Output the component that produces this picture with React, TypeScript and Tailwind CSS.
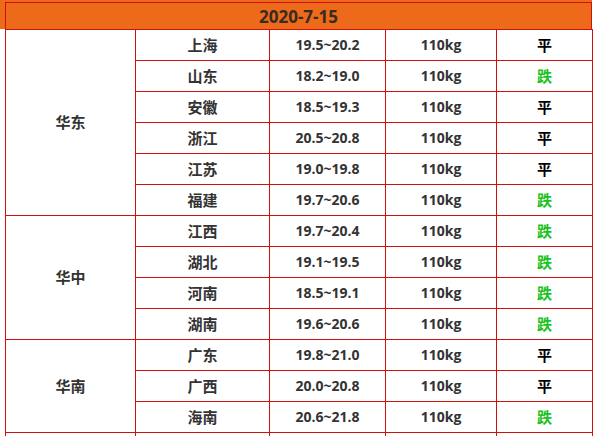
import React from 'react';

type Row = { city: string; range: string; trend: '平' | '跌' };
type Group = { region: string; rows: Row[] };

const groups: Group[] = [
  {
    region: '华东',
    rows: [
      { city: '上海', range: '19.5~20.2', trend: '平' },
      { city: '山东', range: '18.2~19.0', trend: '跌' },
      { city: '安徽', range: '18.5~19.3', trend: '平' },
      { city: '浙江', range: '20.5~20.8', trend: '平' },
      { city: '江苏', range: '19.0~19.8', trend: '平' },
      { city: '福建', range: '19.7~20.6', trend: '跌' },
    ],
  },
  {
    region: '华中',
    rows: [
      { city: '江西', range: '19.7~20.4', trend: '跌' },
      { city: '湖北', range: '19.1~19.5', trend: '跌' },
      { city: '河南', range: '18.5~19.1', trend: '跌' },
      { city: '湖南', range: '19.6~20.6', trend: '跌' },
    ],
  },
  {
    region: '华南',
    rows: [
      { city: '广东', range: '19.8~21.0', trend: '平' },
      { city: '广西', range: '20.0~20.8', trend: '平' },
      { city: '海南', range: '20.6~21.8', trend: '跌' },
    ],
  },
];

const cell = 'border border-[#d10f0f] text-center align-middle p-0';

export default function App() {
  return (
    <div
      className="h-[436px] w-[596px] overflow-hidden bg-white font-bold text-[#333]"
      style={{ fontFamily: '"Open Sans", "Noto Sans CJK SC", sans-serif' }}
    >
      <div className="bg-[#ec6a1a] pt-[2px] w-[592px]">
        <div className="ml-[5px] flex h-[27px] items-center justify-center border-t border-r border-l border-[#d10f0f] text-[17px] leading-none text-[#3a2b22]">
          2020-7-15
        </div>
      </div>
      <table className="ml-[5px] w-[587px] table-fixed border-collapse text-[14px] leading-none">
        <colgroup>
          <col className="w-[130px]" />
          <col className="w-[134px]" />
          <col className="w-[116px]" />
          <col className="w-[111px]" />
          <col className="w-[96px]" />
        </colgroup>
        <tbody>
          {groups.map((g) =>
            g.rows.map((r, i) => (
              <tr key={g.region + r.city} className="h-[31px]">
                {i === 0 && (
                  <td rowSpan={g.rows.length} className={`${cell} text-[15px]`}>
                    {g.region}
                  </td>
                )}
                <td className={`${cell} text-[15px]`}>{r.city}</td>
                <td className={cell}>{r.range}</td>
                <td className={cell}>110kg</td>
                <td
                  className={`${cell} text-[15px] ${r.trend === '平' ? 'text-black' : 'text-[#1cc21c]'}`}
                >
                  {r.trend}
                </td>
              </tr>
            ))
          )}
          {/* next region starts just below the fold */}
          <tr className="h-[31px]">
            <td className={cell} />
            <td className={cell} />
            <td className={cell} />
            <td className={cell} />
            <td className={cell} />
          </tr>
        </tbody>
      </table>
    </div>
  );
}
